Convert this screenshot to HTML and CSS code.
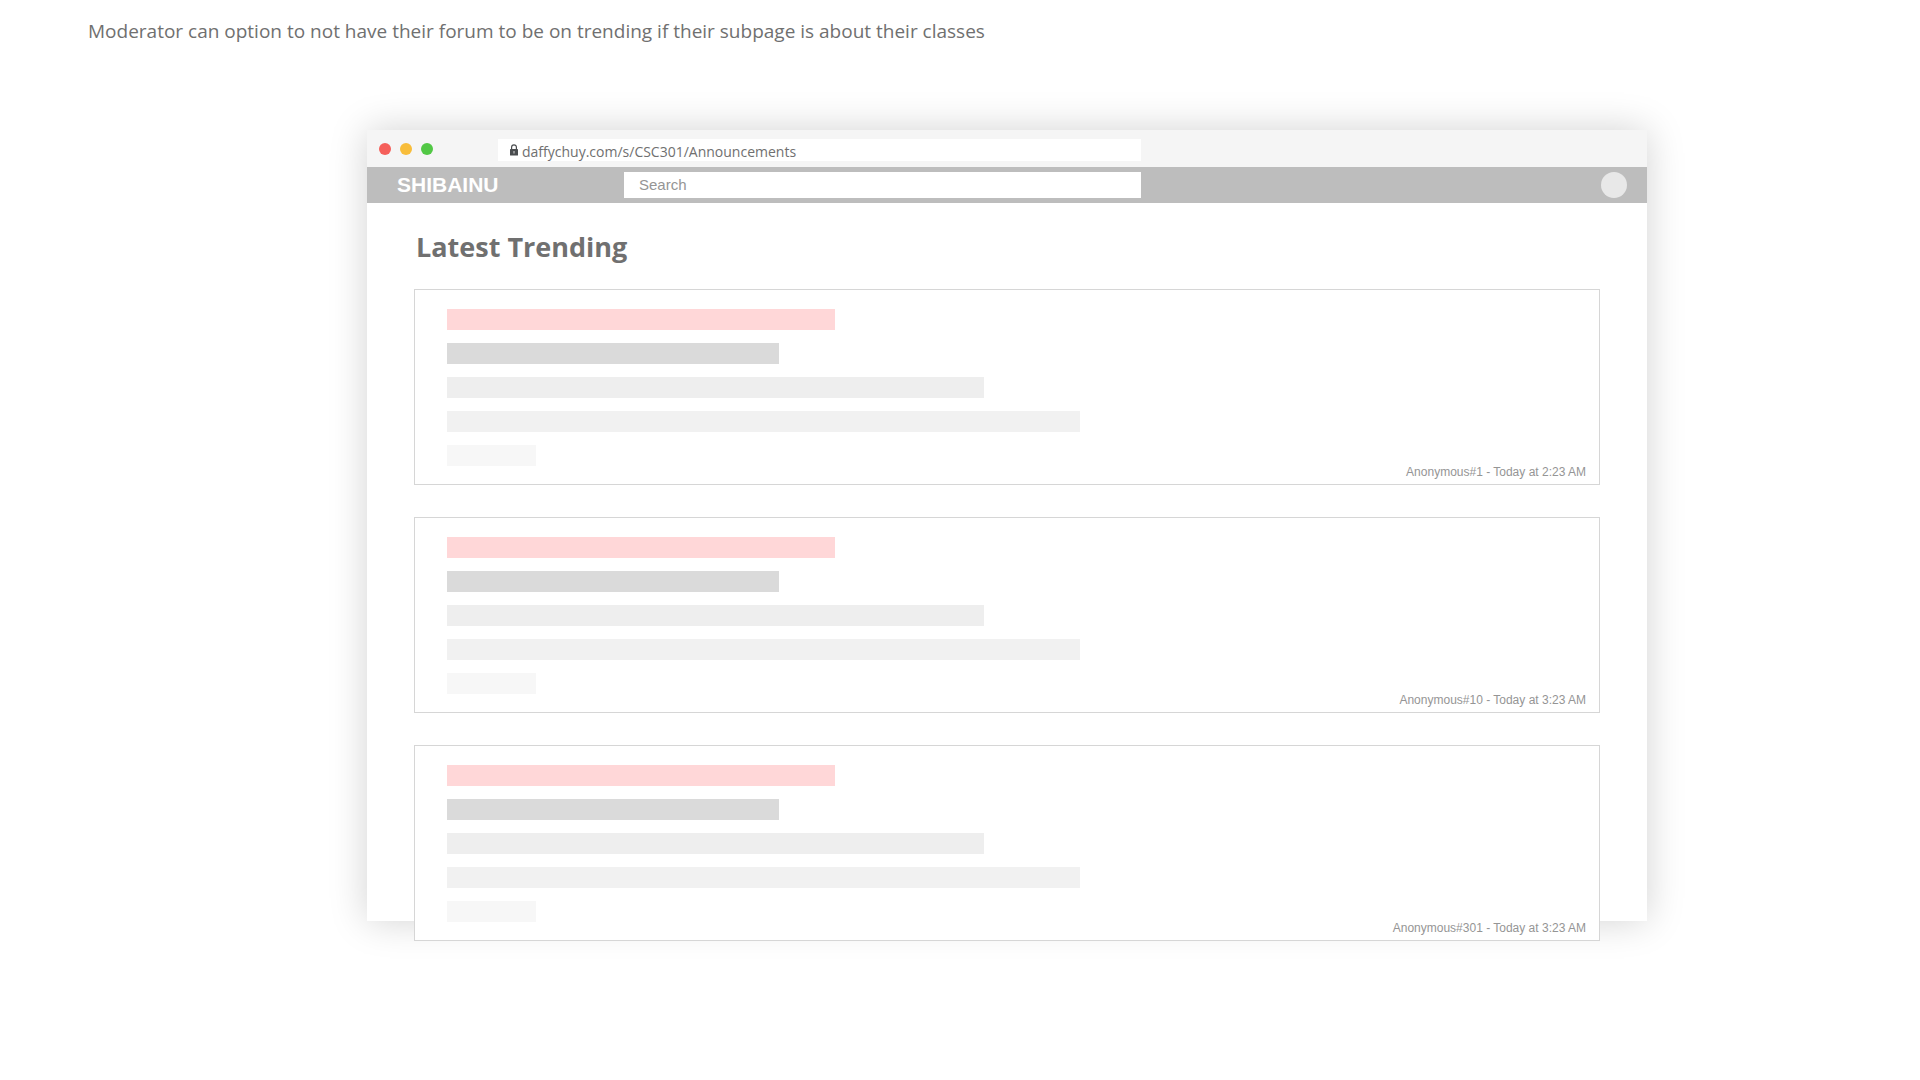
FILE: index.html
```
<!DOCTYPE html>
<html lang="en">
<head>
<meta charset="utf-8">
<meta name="viewport" content="width=device-width, initial-scale=1">
<title>Shibainu - Latest Trending</title>
<link rel="stylesheet" href="styles.css">
</head>
<body>
<p class="note">Moderator can option to not have their forum to be on trending if their subpage is about their classes</p>

<div class="window">
  <div class="chrome">
    <div class="lights">
      <span class="light red"></span>
      <span class="light yellow"></span>
      <span class="light green"></span>
    </div>
    <label class="address">
      <svg class="lock" viewBox="0 0 8 12" width="8" height="12" aria-hidden="true">
        <path d="M1.6 5.5V3.2a2.4 2.4 0 0 1 4.8 0v2.3" fill="none" stroke="#4a4d4f" stroke-width="1.2"/>
        <rect x="0" y="5" width="8" height="6.6" rx="0.6" fill="#4a4d4f"/>
        <path d="M4 7.1v2.4" stroke="#c4c4c4" stroke-width="1.2"/>
      </svg>
      <input class="address-input" type="text" aria-label="Address" value="daffychuy.com/s/CSC301/Announcements">
    </label>
  </div>

  <header class="navbar">
    <a class="brand" href="#">SHIBAINU</a>
    <input class="search" type="search" aria-label="Search" placeholder="Search">
    <button class="avatar" type="button" aria-label="Account"></button>
  </header>

  <main class="content">
    <h1 class="title">Latest Trending</h1>
    <div class="posts">
      <article class="post">
        <div class="lines">
          <div class="line topic"></div>
          <div class="line heading"></div>
          <div class="line body-one"></div>
          <div class="line body-two"></div>
          <div class="line tag"></div>
        </div>
        <p class="meta">Anonymous#1 - Today at 2:23 AM</p>
      </article>
      <article class="post">
        <div class="lines">
          <div class="line topic"></div>
          <div class="line heading"></div>
          <div class="line body-one"></div>
          <div class="line body-two"></div>
          <div class="line tag"></div>
        </div>
        <p class="meta">Anonymous#10 - Today at 3:23 AM</p>
      </article>
      <article class="post">
        <div class="lines">
          <div class="line topic"></div>
          <div class="line heading"></div>
          <div class="line body-one"></div>
          <div class="line body-two"></div>
          <div class="line tag"></div>
        </div>
        <p class="meta">Anonymous#301 - Today at 3:23 AM</p>
      </article>
    </div>
  </main>
</div>
</body>
</html>
```
FILE: styles.css
```
* {
  box-sizing: border-box;
}

body {
  min-height: 100vh;
  margin: 0;
  padding: 19px 273px 48px 367px;
  background: #fff;
  color: #707070;
  font-family: "Open Sans", "Noto Sans", sans-serif;
}

.note {
  margin: 0 0 87px -279px;
  font-size: 19px;
  line-height: 24px;
}

.window {
  display: flow-root;
  background: #fff;
  box-shadow: 0 0 36px rgba(0, 0, 0, 0.18);
}

/* Browser bar */
.chrome {
  display: flex;
  gap: 65px;
  padding: 9px 12px 6px;
  background: #f5f5f5;
}

.lights {
  display: flex;
  align-items: center;
  gap: 9px;
  height: 20px;
}

.light {
  width: 12px;
  height: 12px;
  border-radius: 50%;
}

.red { background: #f55f5a; }
.yellow { background: #f8bd3a; }
.green { background: #52c845; }

.address {
  display: flex;
  align-items: center;
  gap: 4px;
  width: 643px;
  height: 22px;
  padding-left: 12px;
  background: #fff;
}

.lock {
  flex: none;
}

.address-input {
  flex: 1;
  min-width: 0;
  height: 22px;
  padding: 2px 0 0;
  border: 0;
  background: none;
  color: #707070;
  font: 14px/20px "Open Sans", "Noto Sans", sans-serif;
}

/* Site bar */
.navbar {
  display: flex;
  align-items: center;
  height: 36px;
  padding: 0 20px 0 30px;
  background: #bdbdbd;
}

.brand {
  width: 227px;
  color: #fff;
  font: bold 21px/26px "Liberation Sans", Arial, sans-serif;
  text-decoration: none;
}

.search {
  appearance: none;
  width: 517px;
  height: 26px;
  padding: 0 15px;
  border: 0;
  border-radius: 0;
  background: #fff;
  color: #707070;
  font: 15px/26px "Liberation Sans", Arial, sans-serif;
}

.search::placeholder {
  color: #959595;
}

.avatar {
  width: 26px;
  height: 26px;
  margin-left: auto;
  padding: 0;
  border: 0;
  border-radius: 50%;
  background: #e8e8e8;
}

/* Feed */
.content {
  padding: 26px 47px 0;
}

.title {
  margin: 0 0 24px;
  padding-left: 2px;
  font-size: 27px;
  font-weight: 700;
  line-height: 36px;
}

/* The last post hangs over the lower edge of the window */
.posts {
  display: flex;
  flex-direction: column;
  gap: 32px;
  margin-bottom: -20px;
}

.post {
  display: flex;
  justify-content: space-between;
  border: 1px solid #d6d6d6;
  background: #fff;
  padding: 0 13px 0 32px;
}

.lines {
  display: flex;
  flex-direction: column;
  gap: 13px;
  padding: 19px 0 18px;
}

.line {
  height: 21px;
}

.topic { width: 388px; background: #ffd7d8; }
.heading { width: 332px; background: #dadada; }
.body-one { width: 537px; background: #eee; }
.body-two { width: 633px; background: #f1f1f1; }
.tag { width: 89px; background: #f7f7f7; }

.meta {
  align-self: flex-end;
  margin: 0;
  padding-bottom: 5px;
  color: #959595;
  font: 12px/14px "Liberation Sans", Arial, sans-serif;
}
```
